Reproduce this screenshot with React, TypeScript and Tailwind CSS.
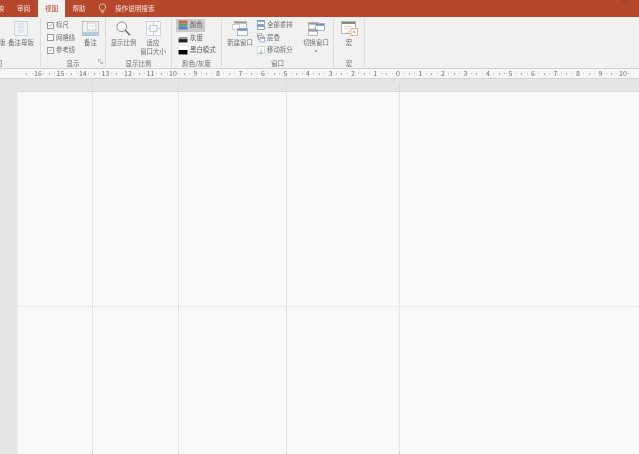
import React from "react";

const font = { fontFamily: '"Noto Sans CJK SC", "Noto Sans", sans-serif' };

function Group({ w, label, children, last, end, launcher }: { w: string; label: string; children: React.ReactNode; last?: boolean; end?: boolean; launcher?: boolean }) {
  return (
    <div className={`${w} relative flex h-full shrink-0 flex-col overflow-hidden ${last ? "" : "border-r border-[#dcdcdc]"}`}>
      <div className={`flex h-[41px] shrink-0 pt-[2px] ${end ? "justify-end" : ""}`}>{children}</div>
      <div className={`flex h-[9px] items-center text-[6.5px] leading-none text-[#6e6e6e] ${end ? "justify-end pr-[38px]" : "justify-center"}`}>
        <span className="whitespace-nowrap">{label}</span>
      </div>
      {launcher && (
        <svg className="absolute bottom-[3px] right-[2px]" width="5" height="5" viewBox="0 0 5 5">
          <path d="M0.5 0.5H3M0.5 0.5V3M2 2L4.5 4.5M4.5 2.5V4.5H2.5" stroke="#999" strokeWidth="0.6" fill="none" />
        </svg>
      )}
    </div>
  );
}

function Check({ on, label }: { on?: boolean; label: string }) {
  return (
    <div className="flex h-[12.5px] items-center gap-[2px] whitespace-nowrap text-[6.4px] leading-none text-[#6e6e6e]">
      <span className="flex h-[7px] w-[7px] items-center justify-center border border-[#9a9a9a] bg-white">
        {on && (
          <svg width="6" height="6" viewBox="0 0 6 6">
            <path d="M1 3L2.4 4.5L5 1.3" stroke="#888" strokeWidth="0.8" fill="none" />
          </svg>
        )}
      </span>
      {label}
    </div>
  );
}

function Tall({ icon, label, w, line2 }: { icon?: React.ReactNode; label: string; w: string; line2?: string }) {
  return (
    <div className={`${w} flex shrink-0 flex-col items-center text-center text-[6.4px] leading-[9px] text-[#6e6e6e]`}>
      <div className="flex h-[16px] items-end justify-center">{icon}</div>
      <span className="mt-[2px] whitespace-nowrap">{label}</span>
      {line2 && <span className="whitespace-nowrap">{line2}</span>}
    </div>
  );
}

function ColorRow({ kind, label, active }: { kind: "color" | "gray" | "bw"; label: string; active?: boolean }) {
  return (
    <div className={`flex h-[12.5px] items-center gap-[2px] whitespace-nowrap pl-[2px] pr-[1px] text-[6.4px] leading-none text-[#5c5c5c] ${active ? "w-[29px] bg-[#cbcbcb]" : ""}`}>
      <svg width="10" height="10" viewBox="0 0 9 9" className="shrink-0">
        {kind === "color" && (
          <>
            <rect x="0.5" y="0.5" width="8" height="2.7" fill="#d9604a" />
            <rect x="0.5" y="3.2" width="8" height="2.7" fill="#58a878" />
            <rect x="0.5" y="5.9" width="8" height="2.7" fill="#5a86c4" />
          </>
        )}
        {kind === "gray" && (
          <>
            <rect x="0.5" y="0.5" width="8" height="3" fill="#f8f8f8" />
            <rect x="0.5" y="3.5" width="8" height="2" fill="#9a9a9a" />
            <rect x="0.5" y="5.5" width="8" height="3" fill="#222" />
          </>
        )}
        {kind === "bw" && (
          <>
            <rect x="0.5" y="0.5" width="8" height="4" fill="#fff" stroke="#ddd" strokeWidth="0.4" />
            <rect x="0.5" y="4.5" width="8" height="4" fill="#000" />
          </>
        )}
      </svg>
      {label}
    </div>
  );
}

function SmallRow({ icon, label }: { icon: React.ReactNode; label: string }) {
  return (
    <div className="flex h-[12.5px] items-center gap-[2px] whitespace-nowrap text-[6.4px] leading-none text-[#6e6e6e]">
      {icon}
      {label}
    </div>
  );
}

const IconNotesMaster = (
  <svg width="14" height="15" viewBox="0 0 14 15">
    <rect x="0.5" y="0.5" width="13" height="14" fill="#f1f4f6" stroke="#ccd2d8" />
    <rect x="4" y="2.5" width="6" height="4" fill="#e6eaee" stroke="#ced4da" strokeWidth="0.5" />
    <path d="M4 9H10M4 11H10" stroke="#c4d6e8" strokeWidth="0.8" />
  </svg>
);
const IconNotes = (
  <svg width="17" height="15" viewBox="0 0 17 15">
    <rect x="0.5" y="0.5" width="16" height="14" fill="#fff" stroke="#a8a8a8" strokeWidth="0.7" />
    <rect x="5" y="2" width="9" height="7" fill="#fff" stroke="#aaa" strokeWidth="0.7" />
    <path d="M7 5H12" stroke="#c2c2c2" strokeWidth="0.7" />
    <rect x="1" y="10.5" width="15" height="3.5" fill="#b4cce4" />
    <rect x="1" y="1" width="2.5" height="9.5" fill="#f1f1f1" />
  </svg>
);
const IconZoom = (
  <svg width="15" height="15" viewBox="0 0 15 15">
    <circle cx="5.8" cy="5.8" r="4.8" fill="#fdfdfd" stroke="#808080" strokeWidth="0.9" />
    <path d="M9.2 9.3L14 14.3" stroke="#707070" strokeWidth="1.6" />
  </svg>
);
const IconFit = (
  <svg width="15" height="15" viewBox="0 0 15 15">
    <rect x="0.5" y="0.5" width="14" height="14" fill="#fbfbfb" stroke="#c0c6cc" strokeWidth="0.7" />
    <rect x="4" y="4.5" width="7" height="6" fill="none" stroke="#a4aeb6" strokeWidth="0.7" />
    <path d="M7.5 1.5V3.5M7.5 11.5V13.5M1.5 7.5H3M12 7.5H13.5" stroke="#7fb0dc" strokeWidth="0.8" />
  </svg>
);
const IconNewWindow = (
  <svg width="16" height="15" viewBox="0 0 16 15">
    <rect x="2.5" y="0.5" width="12" height="7" fill="#fff" stroke="#999" strokeWidth="0.7" />
    <rect x="3" y="1" width="11" height="1.6" fill="#999" />
    <rect x="0.5" y="3.5" width="7" height="5" fill="#fff" stroke="#b4b4b4" strokeWidth="0.6" />
    <rect x="5.5" y="7.5" width="10" height="7" fill="#fff" stroke="#7c9fc6" strokeWidth="0.7" />
    <rect x="6" y="8" width="9" height="1.8" fill="#6b95c4" />
  </svg>
);
const IconArrange = (
  <svg width="8" height="10" viewBox="0 0 8 10" className="shrink-0">
    <rect x="0.5" y="0.5" width="7" height="4" fill="#fff" stroke="#5f8cbc" strokeWidth="0.7" />
    <rect x="0.5" y="0.5" width="7" height="1.2" fill="#5f8cbc" />
    <rect x="0.5" y="5.5" width="7" height="4" fill="#fff" stroke="#5f8cbc" strokeWidth="0.7" />
    <rect x="0.5" y="5.5" width="7" height="1.2" fill="#5f8cbc" />
  </svg>
);
const IconCascade = (
  <svg width="8" height="10" viewBox="0 0 8 10" className="shrink-0">
    <rect x="0.3" y="0.8" width="4.5" height="4" fill="#fff" stroke="#888" strokeWidth="0.6" />
    <rect x="1.6" y="2.6" width="4.5" height="4" fill="#fff" stroke="#888" strokeWidth="0.6" />
    <rect x="3" y="4.5" width="4.7" height="4.5" fill="#fff" stroke="#6b95c4" strokeWidth="0.6" />
    <rect x="3" y="4.5" width="4.7" height="1.2" fill="#6b95c4" />
  </svg>
);
const IconSplit = (
  <svg width="8" height="10" viewBox="0 0 8 10" className="shrink-0">
    <rect x="0.3" y="1.5" width="7.4" height="7" fill="#fff" stroke="#999" strokeWidth="0.6" strokeDasharray="1 0.6" />
    <path d="M4 4V8.5M2.5 7L4 8.5L5.5 7" stroke="#6b95c4" strokeWidth="0.7" fill="none" />
  </svg>
);
const IconSwitch = (
  <svg width="17" height="14" viewBox="0 0 17 14">
    <rect x="0.5" y="0.5" width="10" height="6.5" fill="#fff" stroke="#999" strokeWidth="0.7" />
    <rect x="1" y="1" width="9" height="1.6" fill="#999" />
    <rect x="7.5" y="1.5" width="9" height="7" fill="#fff" stroke="#7c9fc6" strokeWidth="0.7" />
    <rect x="8" y="2" width="8" height="1.8" fill="#6b95c4" />
    <rect x="0.5" y="7.5" width="9" height="6" fill="#fff" stroke="#999" strokeWidth="0.7" />
    <rect x="1" y="8" width="8" height="1.6" fill="#999" />
  </svg>
);
const IconMacro = (
  <svg width="17" height="15" viewBox="0 0 17 15">
    <rect x="0.5" y="0.5" width="14" height="12" fill="#fff" stroke="#999" strokeWidth="0.7" />
    <rect x="1" y="1" width="13" height="2" fill="#888" />
    <path d="M3 5.5H10M3 8H8" stroke="#c4c4c4" strokeWidth="0.7" />
    <rect x="10" y="7.5" width="6.5" height="7" fill="#fff" stroke="#e8a070" strokeWidth="0.8" />
    <path d="M6 12L10 9" stroke="#e8a070" strokeWidth="0.8" />
    <circle cx="13.2" cy="11" r="1.3" fill="#efb690" />
  </svg>
);

const leftNums = [16, 15, 14, 13, 12, 11, 10, 9, 8, 7, 6, 5, 4, 3, 2, 1];
const rightNums = [0, 1, 2, 3, 4, 5, 6, 7, 8, 9, 10];

function RulerCell({ n }: { n: number }) {
  return (
    <div className="relative flex h-full w-[22.5px] shrink-0 items-center justify-center">
      <span className="text-[7px] leading-none text-[#707070]">{n}</span>
      <span className="absolute left-[-0.5px] top-[4px] h-[2px] w-px bg-[#aaa]" />
      <span className="absolute left-[5px] top-[4px] h-px w-px bg-[#bbb]" />
      <span className="absolute right-[5px] top-[4px] h-px w-px bg-[#bbb]" />
    </div>
  );
}

export default function App() {
  return (
    <div className="relative flex h-[454px] w-[639px] flex-col overflow-hidden bg-[#e6e6e6] blur-[0.35px]" style={font}>
      {/* title tabs */}
      <div className="relative flex h-[17px] shrink-0 items-end bg-[#b7472a] text-[6.6px] text-[#f6e6e0]">
        <span className="flex h-full w-[4px] items-center justify-end overflow-hidden">
          <span className="shrink-0 whitespace-nowrap">映</span>
        </span>
        <span className="flex h-full w-[34px] items-center pl-[13px]">审阅</span>
        <span className="flex h-full w-[27px] items-center justify-center bg-[#f1f1f1] text-[#b7472a]">视图</span>
        <span className="flex h-full w-[28px] items-center justify-center">帮助</span>
        <span className="flex h-full w-[16px] items-center justify-center pl-[2px]">
          <svg width="9" height="11" viewBox="0 0 9 12">
            <path d="M4.5 1A3.3 3.3 0 0 0 2.8 7.2V8.8H6.2V7.2A3.3 3.3 0 0 0 4.5 1ZM3.3 10.5H5.7" stroke="#f6e6e0" strokeWidth="0.8" fill="none" />
          </svg>
        </span>
        <span className="flex h-full items-center pl-[6px]">操作说明搜索</span>
        <svg className="absolute right-[8px] top-0" width="10" height="7" viewBox="0 0 10 7">
          <path d="M0 0H10L5 6Z" fill="#a8432b" />
        </svg>
      </div>

      {/* ribbon */}
      <div className="flex h-[52px] shrink-0 items-stretch border-b border-[#d2d2d2] bg-[#f1f1f1] py-[1px]">
        <Group w="w-[41px]" label="母版视图" end>
          <div className="flex shrink-0 items-start gap-[3px] pr-[6px]">
            <Tall w="w-[25px]" label="讲义母版" />
            <Tall w="w-[26px]" icon={IconNotesMaster} label="备注母版" />
          </div>
        </Group>
        <Group w="w-[65px]" label="显示" launcher>
          <div className="-mt-[1px] flex h-full w-full pl-[6px]">
            <div className="flex w-[35px] flex-col">
              <Check on label="标尺" />
              <Check label="网格线" />
              <Check on label="参考线" />
            </div>
            <div className="mt-[1px]">
              <Tall w="w-[17px]" icon={IconNotes} label="备注" />
            </div>
          </div>
        </Group>
        <Group w="w-[66px]" label="显示比例">
          <div className="flex w-full pl-[4px]">
            <Tall w="w-[27px]" icon={IconZoom} label="显示比例" />
            <Tall w="w-[32px]" icon={IconFit} label="适应" line2="窗口大小" />
          </div>
        </Group>
        <Group w="w-[50px]" label="颜色/灰度">
          <div className="-mt-[1px] flex flex-col pl-[4px]">
            <ColorRow kind="color" label="颜色" active />
            <ColorRow kind="gray" label="灰度" />
            <ColorRow kind="bw" label="黑白模式" />
          </div>
        </Group>
        <Group w="w-[112px]" label="窗口">
          <div className="flex w-full pl-[4px]">
            <Tall w="w-[28px]" icon={IconNewWindow} label="新建窗口" />
            <div className="-mt-[1px] ml-[3px] flex w-[44px] flex-col">
              <SmallRow icon={IconArrange} label="全部重排" />
              <SmallRow icon={IconCascade} label="层叠" />
              <SmallRow icon={IconSplit} label="移动拆分" />
            </div>
            <div className="flex w-[30px] flex-col items-center text-[6.4px] leading-[9px] text-[#6e6e6e]">
              <div className="flex h-[16px] items-end">{IconSwitch}</div>
              <span className="mt-[2px] whitespace-nowrap">切换窗口</span>
              <svg width="4" height="3" viewBox="0 0 4 3" className="mt-[3px]">
                <path d="M0.5 0.5H3.5L2 2.5Z" fill="#808080" />
              </svg>
            </div>
          </div>
        </Group>
        <Group w="w-[31px]" label="宏">
          <Tall w="w-full" icon={IconMacro} label="宏" />
        </Group>
        <div className="flex-1" />
      </div>

      {/* ruler */}
      <div className="flex h-[10px] shrink-0 overflow-hidden border-b border-[#d4d4d4] bg-[#f6f6f6] pl-[26.75px]">
        {leftNums.map((n) => (
          <RulerCell key={`l${n}`} n={n} />
        ))}
        {rightNums.map((n) => (
          <RulerCell key={`r${n}`} n={n} />
        ))}
      </div>

      {/* workspace */}
      <div className="relative flex flex-1 flex-col pl-[18px] pt-[12px]">
        <div className="flex-1 border-t border-[#d8d8d8] bg-[#f9f9f9] shadow-[-1px_0_0_#efefef]" />
        {[92, 178, 286, 399].map((x) => (
          <span key={x} className="absolute bottom-0 top-[4px] w-0 border-l border-dotted border-[#d2d2d2]" style={{ left: x }} />
        ))}
        <span className="absolute left-0 right-0 top-[227px] h-0 border-t border-dotted border-[#dddddd]" />
      </div>
    </div>
  );
}
